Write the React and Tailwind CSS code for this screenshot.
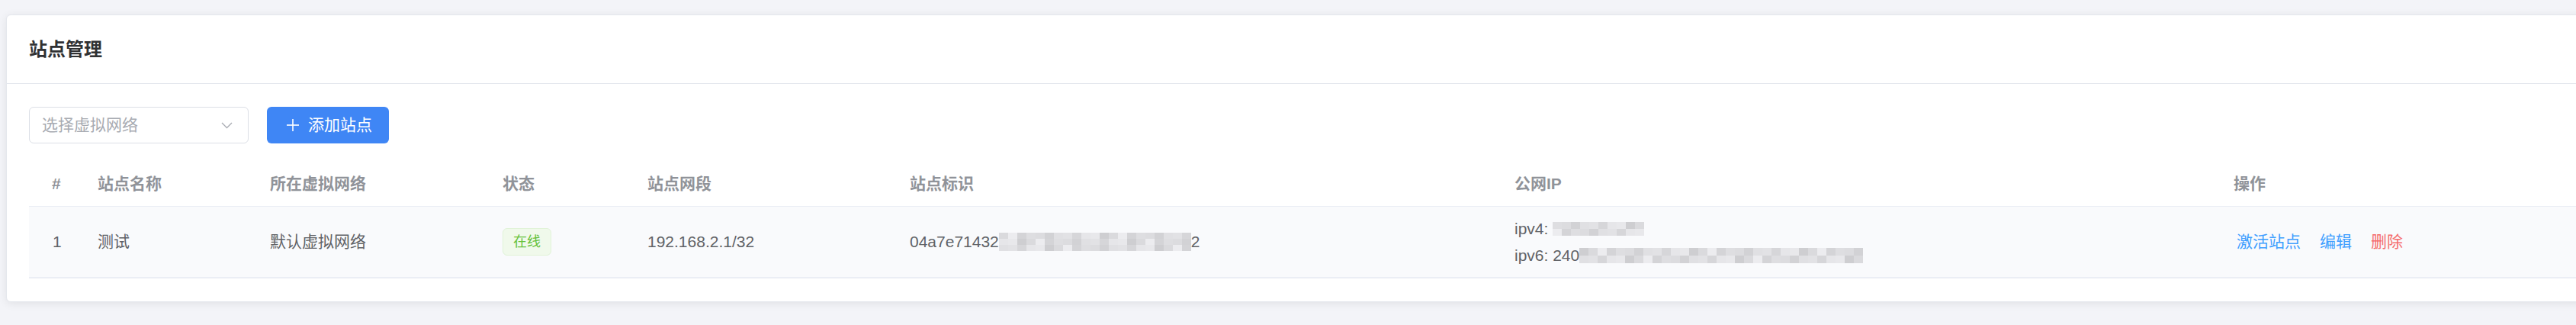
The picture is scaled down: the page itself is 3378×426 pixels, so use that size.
import React from 'react';

const FONT = "font-['Liberation_Sans','Noto_Sans_CJK_SC',sans-serif]";

// column widths taken from the header text positions
const COLS = 'grid grid-cols-[90px_226px_305px_190px_344px_793px_943px_1fr]';

const HEADERS = ['#', '站点名称', '所在虚拟网络', '状态', '站点网段', '站点标识', '公网IP', '操作'];

// pseudo-random greys for the pixelated (redacted) parts
const shade = (i) => {
  const v = [226, 218, 210, 232, 222, 214, 236, 224, 206, 220, 230, 212][(i * 5 + 3) % 12];
  return `rgb(${v},${v},${v + 3})`;
};

const Mosaic = ({ cols, rows, w = 12, h = 9, seed = 0 }) => (
  <span className="inline-grid align-middle" style={{ gridTemplateColumns: `repeat(${cols}, ${w}px)` }}>
    {Array.from({ length: cols * rows }).map((_, i) => (
      <span key={i} style={{ width: w, height: h, background: shade(i + seed) }} />
    ))}
  </span>
);

const App = () => {
  return (
    <div className={`w-full h-[426px] overflow-hidden bg-[#f3f4f8] pt-[19px] ${FONT}`}>
      <div className="ml-[8px] -mr-[40px] bg-white border border-[#e4e7ed] rounded-[6px] shadow-[0_2px_12px_rgba(0,0,0,0.08)]">
        {/* header */}
        <div className="h-[90px] border-b border-[#e4e7ed] flex items-center pl-[29px]">
          <h2 className="text-[24px] font-bold text-[#303133] leading-none">站点管理</h2>
        </div>

        <div className="pl-[29px] pt-[30px] pb-[30px]">
          {/* toolbar */}
          <div className="flex items-center gap-[24px]">
            <div className="w-[288px] h-[48px] border border-[#dcdfe6] rounded-[6px] flex items-center justify-between pl-[16px] pr-[20px]">
              <span className="text-[21px] text-[#a8abb2]">选择虚拟网络</span>
              <svg width="15" height="9" viewBox="0 0 15 9" fill="none" stroke="#a8abb2" strokeWidth="1.3">
                <polyline points="1,1 7.5,7.5 14,1" />
              </svg>
            </div>
            <button className="w-[160px] h-[48px] rounded-[6px] bg-[#3f86f5] text-white flex items-center pl-[25px] gap-[11px]">
              <svg width="18" height="18" viewBox="0 0 18 18" stroke="white" strokeWidth="1.6">
                <line x1="9" y1="1" x2="9" y2="17" />
                <line x1="1" y1="9" x2="17" y2="9" />
              </svg>
              <span className="text-[21px]">添加站点</span>
            </button>
          </div>

          {/* table */}
          <div className="mt-[24px]">
            <div className={`${COLS} h-[59px] items-center border-b border-[#ebeef5]`}>
              {HEADERS.map((h, i) => (
                <div key={h} className={`text-[21px] font-bold text-[#909399] ${i === 0 ? 'pl-[30px]' : ''}`}>
                  {h}
                </div>
              ))}
            </div>

            <div className={`${COLS} h-[94px] items-center bg-[#f9fafc] border-b-2 border-[#ebeef5] text-[21px] text-[#606266]`}>
              <div className="pl-[31px]">1</div>
              <div>测试</div>
              <div>默认虚拟网络</div>
              <div>
                <span className="inline-flex items-center h-[36px] px-[13px] rounded-[6px] bg-[#f0f9eb] border border-[#e1f3d8] text-[#67c23a] text-[18px]">
                  在线
                </span>
              </div>
              <div>192.168.2.1/32</div>
              <div className="flex items-center">
                <span>04a7e71432</span>
                <Mosaic cols={21} rows={3} w={12} h={8} seed={2} />
                <span>2</span>
              </div>
              <div className="flex flex-col gap-[13px] leading-[22px]">
                <div className="flex items-center">
                  <span className="mr-[6px]">ipv4:</span>
                  <Mosaic cols={10} rows={2} w={12} h={9} seed={5} />
                </div>
                <div className="flex items-center">
                  <span>ipv6: 240</span>
                  <Mosaic cols={31} rows={2} w={12} h={10} seed={1} />
                </div>
              </div>
              <div className="flex items-center gap-[25px] pl-[4px]">
                <span className="text-[#409eff]">激活站点</span>
                <span className="text-[#409eff]">编辑</span>
                <span className="text-[#f56c6c]">删除</span>
              </div>
            </div>
          </div>
        </div>
      </div>
    </div>
  );
};

export default App;
